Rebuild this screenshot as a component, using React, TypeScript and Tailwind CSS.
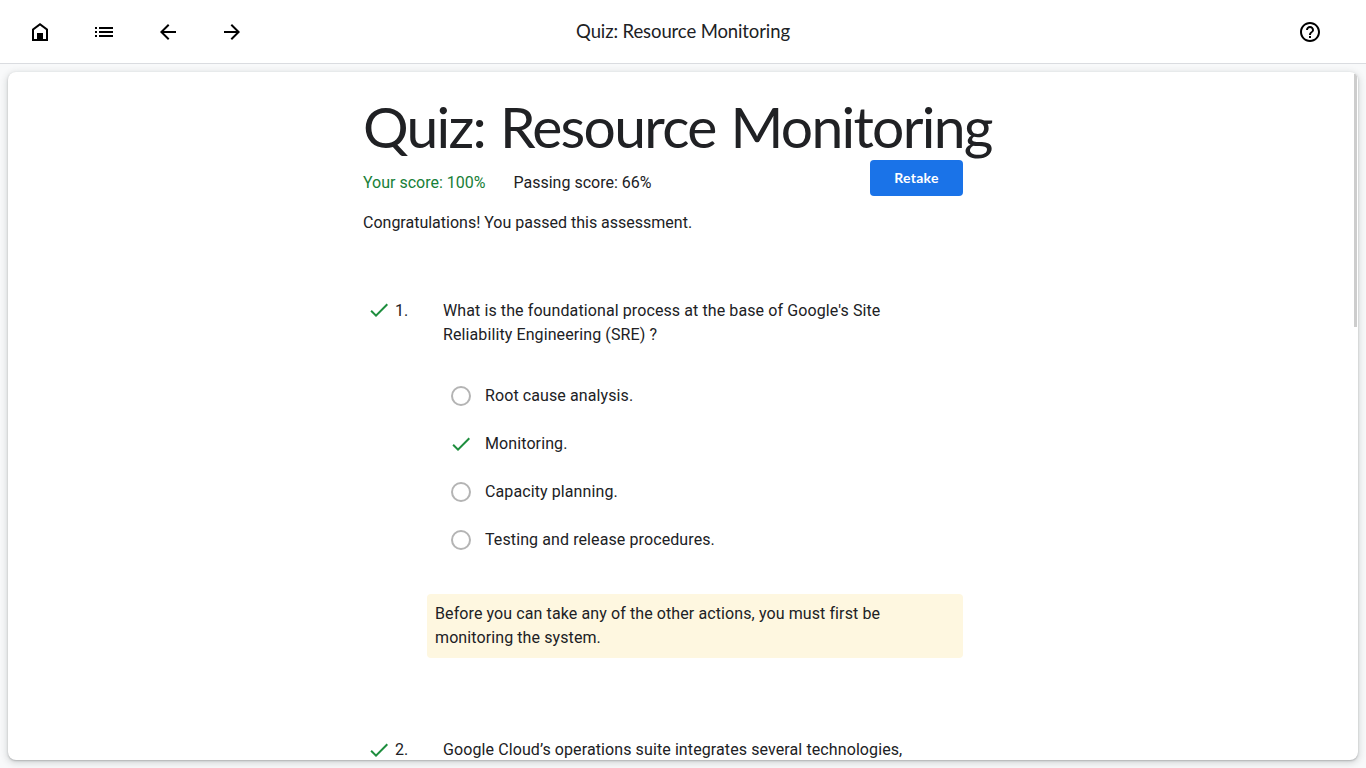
import React from "react";

const paths = {
  home: "M4 21V9l8-6 8 6v12H4zM6 10v9h3v-6h6v6h3v-9l-6-4.5L6 10z",
  list: "M3 13h2v-2H3v2zm0 4h2v-2H3v2zm0-8h2V7H3v2zm4 4h14v-2H7v2zm0 4h14v-2H7v2zM7 7v2h14V7H7z",
  back: "M20 11H7.83l5.59-5.59L12 4l-8 8 8 8 1.41-1.41L7.83 13H20v-2z",
  forward: "M12 4l-1.41 1.41L16.17 11H4v2h12.17l-5.58 5.59L12 20l8-8z",
  help: "M11 18h2v-2h-2v2zm1-16C6.48 2 2 6.48 2 12s4.48 10 10 10 10-4.48 10-10S17.52 2 12 2zm0 18c-4.41 0-8-3.59-8-8s3.59-8 8-8 8 3.59 8 8-3.59 8-8 8zm0-14c-2.21 0-4 1.79-4 4h2c0-1.1.9-2 2-2s2 .9 2 2c0 2-3 1.75-3 5h2c0-2.25 3-2.5 3-5 0-2.21-1.79-4-4-4z",
  check: "M9 16.17L4.83 12l-1.42 1.41L9 19 21 7l-1.41-1.41z",
};

function Icon({ name, className = "" }: { name: keyof typeof paths; className?: string }) {
  return (
    <svg viewBox="0 0 24 24" className={`size-6 shrink-0 fill-current ${className}`} aria-hidden="true">
      <path fillRule="evenodd" d={paths[name]} />
    </svg>
  );
}

function Option({ label, correct = false }: { label: string; correct?: boolean }) {
  return (
    <li className="flex h-12 items-center">
      <span className="mr-3 flex size-6 items-center justify-center">
        {correct ? (
          <Icon name="check" className="text-[#1e8e3e]" />
        ) : (
          <span className="size-5 rounded-full border-2 border-[#b4b4b4]" />
        )}
      </span>
      <span>{label}</span>
    </li>
  );
}

function QuestionHead({ number, checkClass = "", children }: { number: string; checkClass?: string; children: React.ReactNode }) {
  return (
    <div className="flex">
      <Icon name="check" className={`ml-1 text-[#1e8e3e] ${checkClass}`} />
      <span className="ml-1 w-12 shrink-0 tracking-normal">{number}</span>
      <p className="whitespace-nowrap">{children}</p>
    </div>
  );
}

export default function App() {
  return (
    <div className="flex h-screen flex-col overflow-hidden bg-[#f8f9fa] font-[Roboto,sans-serif] text-base leading-6 text-[#202124]">
      <header className="grid h-16 shrink-0 grid-cols-[1fr_auto_1fr] items-center border-b border-[#dadce0] bg-white text-black">
        <nav className="flex gap-10 pl-7">
          <Icon name="home" />
          <Icon name="list" />
          <Icon name="back" />
          <Icon name="forward" />
        </nav>
        <div className="pb-0.5 font-[Lato,sans-serif] text-[18.5px] tracking-[-0.11px] whitespace-nowrap text-[#202124]">Quiz: Resource Monitoring</div>
        <div className="flex justify-end pr-11">
          <Icon name="help" />
        </div>
      </header>

      <main className="m-2 flex min-h-0 flex-1 justify-between overflow-hidden rounded-lg bg-white shadow-[0_1px_2px_rgba(60,64,67,0.3),0_2px_6px_2px_rgba(60,64,67,0.15)]">
        <div className="ml-[355px] w-[600px]">
          <h1 className="mt-[22px] mb-0.5 h-16 font-[Lato,sans-serif] text-[57px] leading-16 tracking-[-1.7px] [word-spacing:2px] whitespace-nowrap">Quiz: Resource Monitoring</h1>
          <div className="flex h-[51px] items-start justify-between">
            <div className="flex gap-7 pt-[11px]">
              <span className="text-[#188038]">Your score: 100%</span>
              <span>Passing score: 66%</span>
            </div>
            <button className="h-9 w-[93px] rounded bg-[#1a73e8] font-[Lato,sans-serif] text-sm font-bold tracking-[0.25px] text-white">Retake</button>
          </div>
          <p>Congratulations! You passed this assessment.</p>

          <section className="mt-16 tracking-[0.1px]">
            <QuestionHead number="1." checkClass="-mt-px">
              What is the foundational process at the base of Google's Site<br />Reliability Engineering (SRE) ?
            </QuestionHead>
            <ul className="mt-[25px] ml-[86px]">
              <Option label="Root cause analysis." />
              <Option label="Monitoring." correct />
              <Option label="Capacity planning." />
              <Option label="Testing and release procedures." />
            </ul>
            <p className="mt-[30px] ml-16 h-16 rounded bg-[#fef7e0] p-2">
              Before you can take any of the other actions, you must first be<br />monitoring the system.
            </p>
          </section>
          <section className="mt-20 tracking-[0.1px]">
            <QuestionHead number="2.">Google Cloud’s operations suite integrates several technologies,</QuestionHead>
          </section>
        </div>
        <div className="mt-0.5 mr-px h-[253px] w-[3px] bg-[#cdcdcd]" />
      </main>
    </div>
  );
}
